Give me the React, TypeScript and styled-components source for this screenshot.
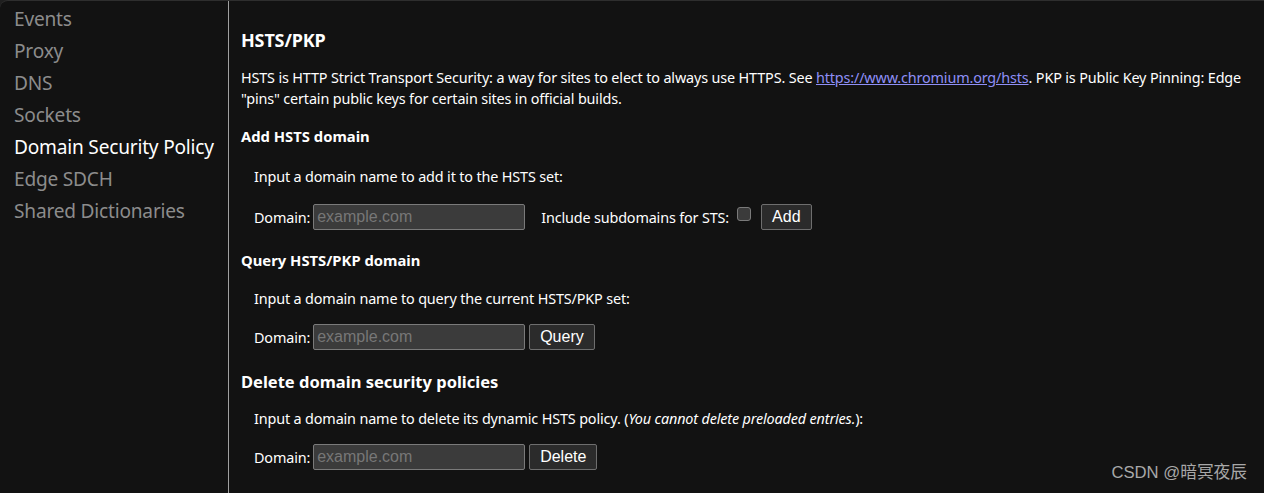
import React from "react";
import styled, { createGlobalStyle } from "styled-components";

const GlobalStyle = createGlobalStyle`
  html, body {
    margin: 0;
    padding: 0;
    background: #1f1f1f;
  }
  body {
    font-family: "Noto Sans", "Segoe UI", sans-serif;
  }
`;

const Frame = styled.div`
  width: 1264px;
  height: 493px;
  display: flex;
  background: #121212;
  border-top: 1px solid #2e2e2e;
  border-top-left-radius: 8px;
  box-sizing: border-box;
  overflow: hidden;
  position: relative;
`;

const Sidebar = styled.nav`
  width: 228px;
  flex-shrink: 0;
  border-right: 1px solid #a0a0a0;
  padding-top: 2px;
  box-sizing: content-box;
`;

const NavItem = styled.div<{ $active?: boolean }>`
  height: 32px;
  line-height: 32px;
  padding-left: 14px;
  font-size: 19.1px;
  letter-spacing: -0.2px;
  color: ${(p) => (p.$active ? "#ffffff" : "#8c8c8c")};
  white-space: nowrap;
`;

const Main = styled.main`
  flex: 1;
  padding: 27px 14px 0 12px;
  color: #ffffff;
  font-size: 14.4px;
  letter-spacing: -0.15px;
`;

const Title = styled.h2`
  margin: 0 0 15px;
  font-size: 18px;
  font-weight: 700;
  line-height: 24px;
`;

const Intro = styled.p`
  margin: 0 0 15px;
  line-height: 21px;
`;

const Link = styled.a`
  color: #8f8ff7;
  text-decoration: underline;
`;

const SubTitle = styled.h3<{ $large?: boolean }>`
  margin: 0;
  font-size: ${(p) => (p.$large ? "16.5px" : "14.8px")};
  font-weight: 700;
  line-height: 24px;
  letter-spacing: 0;
`;

const Section = styled.div`
  padding-left: 13px;
`;

const Hint = styled.p<{ $top: number }>`
  margin: ${(p) => p.$top}px 0 0;
  line-height: 20px;
`;

const FormRow = styled.div<{ $top: number; $bottom: number }>`
  display: flex;
  align-items: center;
  margin-top: ${(p) => p.$top}px;
  margin-bottom: ${(p) => p.$bottom}px;
  height: 26px;
`;

const Label = styled.span`
  margin-right: 3px;
`;

const DomainInput = styled.input`
  width: 212px;
  height: 26px;
  box-sizing: border-box;
  background: #3b3b3b;
  border: 1px solid #7a7a7a;
  border-radius: 2px;
  color: #fff;
  font-family: "Liberation Sans", Arial, sans-serif;
  font-size: 16px;
  padding: 0 3px;
  &::placeholder {
    color: #777777;
  }
`;

const CheckLabel = styled.span`
  margin-left: 16px;
`;

const Check = styled.span`
  width: 14px;
  height: 14px;
  box-sizing: border-box;
  margin: -6px 6px 0 8px;
  background: #3b3b3b;
  border: 1px solid #7a7a7a;
  border-radius: 3px;
`;

const Button = styled.button`
  height: 26px;
  box-sizing: border-box;
  margin-left: 4px;
  padding: 0 10px;
  background: #2b2b2b;
  border: 1px solid #6e6e6e;
  border-radius: 2px;
  color: #ffffff;
  font-family: "Liberation Sans", Arial, sans-serif;
  font-size: 16px;
`;

const Watermark = styled.div`
  position: absolute;
  right: 17px;
  bottom: 10px;
  color: #a8a8a8;
  font-family: "Liberation Sans", "Noto Sans CJK SC", sans-serif;
  font-size: 16.7px;
`;

const navItems = [
  "Events",
  "Proxy",
  "DNS",
  "Sockets",
  "Domain Security Policy",
  "Edge SDCH",
  "Shared Dictionaries",
];

export default function App() {
  return (
    <Frame>
      <GlobalStyle />
      <Sidebar>
        {navItems.map((n) => (
          <NavItem key={n} $active={n === "Domain Security Policy"}>
            {n}
          </NavItem>
        ))}
      </Sidebar>
      <Main>
        <Title>HSTS/PKP</Title>
        <Intro>
          HSTS is HTTP Strict Transport Security: a way for sites to elect to
          always use HTTPS. See{" "}
          <Link href="#">https://www.chromium.org/hsts</Link>. PKP is Public Key
          Pinning: Edge "pins" certain public keys for certain sites in official
          builds.
        </Intro>

        <SubTitle>Add HSTS domain</SubTitle>
        <Section>
          <Hint $top={19}>Input a domain name to add it to the HSTS set:</Hint>
          <FormRow $top={17} $bottom={18}>
            <Label>Domain:</Label>
            <DomainInput placeholder="example.com" />
            <CheckLabel>Include subdomains for STS:</CheckLabel>
            <Check />
            <Button>Add</Button>
          </FormRow>
        </Section>

        <SubTitle>Query HSTS/PKP domain</SubTitle>
        <Section>
          <Hint $top={17}>
            Input a domain name to query the current HSTS/PKP set:
          </Hint>
          <FormRow $top={15} $bottom={20}>
            <Label>Domain:</Label>
            <DomainInput placeholder="example.com" />
            <Button>Query</Button>
          </FormRow>
        </Section>

        <SubTitle $large>Delete domain security policies</SubTitle>
        <Section>
          <Hint $top={15}>
            Input a domain name to delete its dynamic HSTS policy. (
            <i>You cannot delete preloaded entries.</i>):
          </Hint>
          <FormRow $top={15} $bottom={0}>
            <Label>Domain:</Label>
            <DomainInput placeholder="example.com" />
            <Button>Delete</Button>
          </FormRow>
        </Section>
      </Main>
      <Watermark>CSDN @暗冥夜辰</Watermark>
    </Frame>
  );
}
